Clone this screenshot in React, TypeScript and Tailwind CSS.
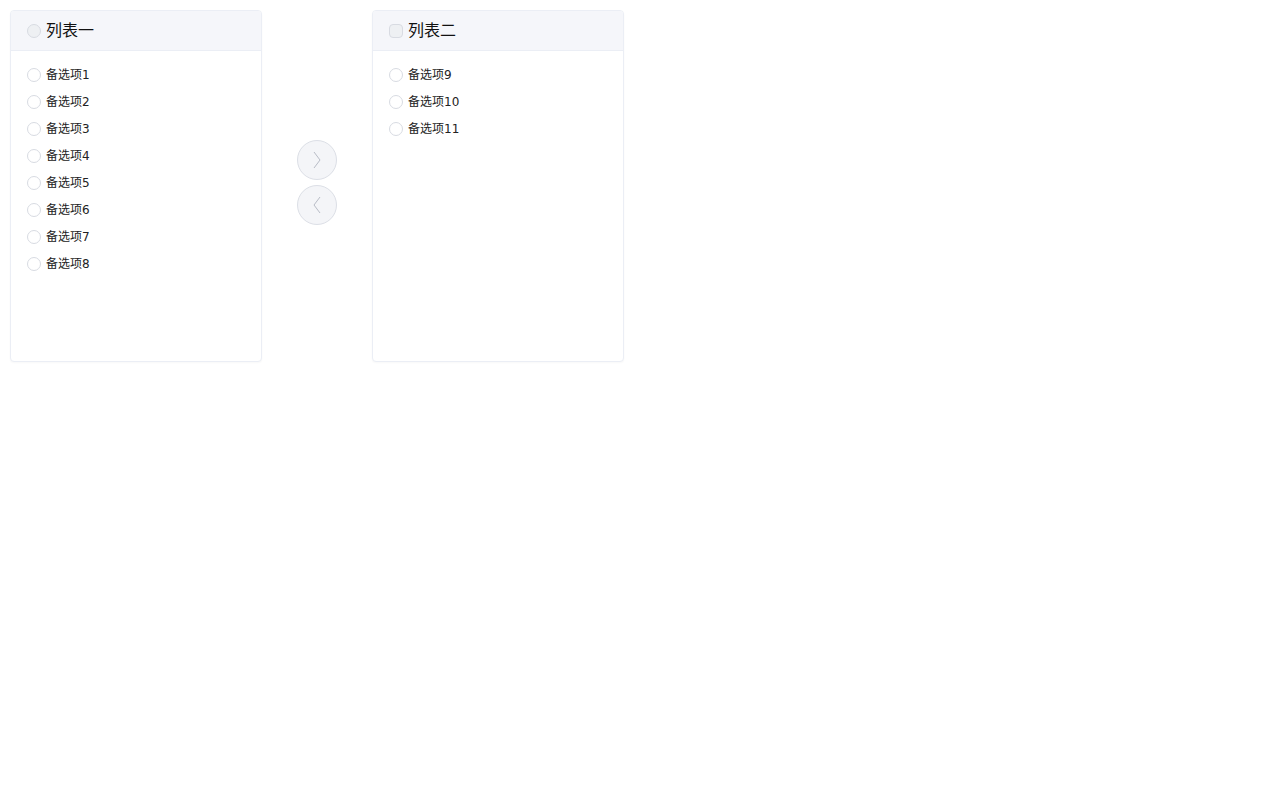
import React from 'react';

const font = { fontFamily: '"DejaVu Sans", "Noto Sans CJK SC", sans-serif' };

const Check: React.FC<{ header?: boolean; square?: boolean }> = ({ header, square }) => (
  <span
    className={
      'inline-block h-[14px] w-[14px] shrink-0 border border-[#d8dbe2] ' +
      (square ? 'rounded-[4px] ' : 'rounded-full ') +
      (header ? 'bg-[#eef0f3]' : 'bg-white')
    }
  />
);

const Panel: React.FC<{ title: string; items: string[]; square?: boolean }> = ({ title, items, square }) => (
  <div className="flex h-[352px] w-[252px] flex-col overflow-hidden rounded-[4px] border border-[#ebeef5] bg-white shadow-[0_1px_2px_rgba(0,0,0,0.03)]">
    <div className="flex h-[40px] items-center gap-[5px] border-b border-[#ebeef5] bg-[#f5f6fa] pl-[16px]">
      <Check header square={square} />
      <span className="text-[16px] text-[#111]">{title}</span>
    </div>
    <ul className="flex flex-col pt-[10px]">
      {items.map(item => (
        <li key={item} className="flex h-[27px] items-center gap-[5px] pl-[16px]">
          <Check />
          <span className="text-[12px] text-[#222]">{item}</span>
        </li>
      ))}
    </ul>
  </div>
);

const Arrow: React.FC<{ dir: 'right' | 'left' }> = ({ dir }) => (
  <button className="flex h-[40px] w-[40px] items-center justify-center rounded-full border border-[#dcdfe6] bg-[#f4f5f8]">
    <svg width="10" height="18" viewBox="0 0 10 18" fill="none" stroke="#b8bcc6" strokeWidth="1">
      {dir === 'right' ? <path d="M2 1l6 8-6 8" /> : <path d="M8 1L2 9l6 8" />}
    </svg>
  </button>
);

export default function App() {
  const left = ['备选项1', '备选项2', '备选项3', '备选项4', '备选项5', '备选项6', '备选项7', '备选项8'];
  const right = ['备选项9', '备选项10', '备选项11'];
  return (
    <div className="flex min-h-[800px] items-start bg-white p-[10px]" style={font}>
      <Panel title="列表一" items={left} />
      <div className="flex h-[352px] w-[110px] flex-col items-center justify-center gap-[5px] pb-[7px]">
        <Arrow dir="right" />
        <Arrow dir="left" />
      </div>
      <Panel title="列表二" items={right} square />
    </div>
  );
}
